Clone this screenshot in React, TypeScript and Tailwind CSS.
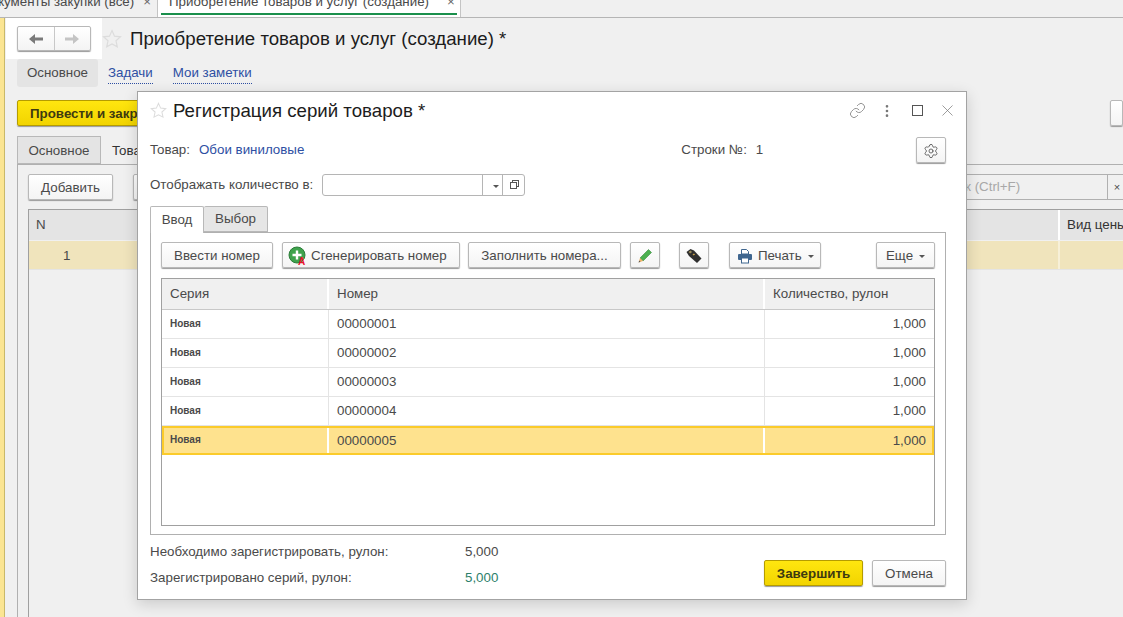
import { Link, MoreVertical, Settings, X } from 'lucide-react';

const btn =
  'flex items-center justify-center rounded-[2px] border border-[#b8b8b8] bg-gradient-to-b from-white to-[#f4f4f4] pt-px shadow-[0_1px_1px_#9a9a9a] text-[13.33px] text-[#4a4a4a]';

const rows = [
  { num: '00000001' },
  { num: '00000002' },
  { num: '00000003' },
  { num: '00000004' },
  { num: '00000005', active: true },
];

function Star({ size = 20 }: { size?: number }) {
  return (
    <svg width={size} height={size} viewBox="0 0 20 20" fill="none" stroke="#dcdcdc" strokeWidth="1.2">
      <path d="M10 1.6l2.5 5.6 6 .6-4.5 4 1.3 6L10 15l-5.3 2.8 1.3-6-4.5-4 6-.6z" />
    </svg>
  );
}

function Caret() {
  return <span className="ml-[6px] mt-[2px] h-0 w-0 border-x-[3px] border-t-[3px] border-x-transparent border-t-[#555]" />;
}

function GenerateIcon() {
  return (
    <svg width="20" height="20" viewBox="0 0 20 20">
      <circle cx="9" cy="9" r="8" fill="#3fa34d" stroke="#2c7d39" />
      <path d="M9 4.5v9M4.5 9h9" stroke="#fff" strokeWidth="2.4" />
      <text x="10" y="19" fontSize="10" fontWeight="700" fill="#e8112d" fontFamily="Liberation Sans, sans-serif">A</text>
    </svg>
  );
}

function PencilIcon() {
  return (
    <svg width="16" height="16" viewBox="0 0 16 16">
      <path d="M11.5 1.5l3 3-8.5 8.5-3-3z" fill="#4cb050" stroke="#3a8a3e" strokeWidth=".6" />
      <path d="M3 10l3 3-4.4 1.4z" fill="#f0b46a" />
      <path d="M1.6 14.4l.6-1.9 1.3 1.3z" fill="#555" />
    </svg>
  );
}

function ScannerIcon() {
  return (
    <svg width="18" height="16" viewBox="0 0 18 16">
      <path d="M1.5 4L5.5 1 9 2.5l7.5 8L12 15 4 8z" fill="#2e2e2e" />
      <path d="M3.5 4l2-1.5 1.6 1.4-2 1.6z" fill="#9a8a5a" />
      <path d="M7.5 6.5l1.4-1.1 1.2 1.1-1.4 1.1z" fill="#c9a24a" />
    </svg>
  );
}

function PrinterIcon() {
  return (
    <svg width="16" height="16" viewBox="0 0 16 16">
      <path d="M4.5 1.5h5l2 2V6h-7z" fill="#fff" stroke="#3f668f" />
      <rect x="1" y="6" width="14" height="6" rx="1" fill="#3f668f" />
      <rect x="4.5" y="10" width="7" height="5" fill="#fff" stroke="#3f668f" />
    </svg>
  );
}

function ArrowIcon({ left, color }: { left?: boolean; color: string }) {
  return (
    <svg width="16" height="12" viewBox="0 0 16 12" fill={color}>
      <path d={left ? 'M1 6l6-5v3.4h8v3.2H7V11z' : 'M15 6L9 1v3.4H1v3.2h8V11z'} />
    </svg>
  );
}

function Dialog() {
  return (
    <div className="absolute left-[137px] top-[91px] z-10 flex h-[509px] w-[830px] flex-col border border-[#a3a3a3] bg-white px-[12px] text-[13.33px] text-[#4a4a4a] shadow-[0_4px_14px_rgba(0,0,0,0.16)]">
      <div className="flex h-[37px] items-center">
        <Star size={17} />
        <span className="ml-[6px] text-[18.67px] text-[#1c1c1c]">Регистрация серий товаров *</span>
        <div className="ml-auto mr-[-8px] flex items-center text-[#777]">
          <span className="flex w-[30px] justify-center"><Link size={17} strokeWidth={1.1} /></span>
          <span className="flex w-[30px] justify-center"><MoreVertical size={16} strokeWidth={2} /></span>
          <span className="flex w-[30px] justify-center"><span className="h-[11px] w-[11px] border border-[#555]" /></span>
          <span className="flex w-[30px] justify-center"><X size={19} strokeWidth={0.9} /></span>
        </div>
      </div>

      <div className="mt-[8px] flex h-[26px] items-center">
        <span>Товар:</span>
        <span className="ml-[9px] text-[#2e4fa3]">Обои виниловые</span>
        <span className="ml-[377px]">Строки №:</span>
        <span className="ml-[9px]">1</span>
        <button className={`${btn} ml-auto mr-[8px] h-[26px] w-[30px]`}>
          <Settings size={16} strokeWidth={1.2} />
        </button>
      </div>

      <div className="mt-[11px] flex h-[22px] items-center">
        <span className="w-[172px]">Отображать количество в:</span>
        <div className="flex h-[22px] w-[203px] rounded-[3px] border border-[#b5b5b5]">
          <div className="w-[160px] border-r border-[#b5b5b5]" />
          <div className="flex w-[20px] items-center justify-center border-r border-[#b5b5b5]"><Caret /></div>
          <div className="flex flex-1 items-center justify-center">
            <span className="relative h-[7px] w-[7px] border border-[#555] shadow-[2px_-2px_0_-1px_#fff,2px_-2px_0_0_#555]" />
          </div>
        </div>
      </div>

      <div className="mt-[10px] flex h-[26px]">
        <div className="z-10 flex h-[27px] w-[54px] items-center justify-center rounded-t-[2px] border border-b-0 border-[#b8b8b8] bg-white">Ввод</div>
        <div className="flex w-[64px] items-center justify-center rounded-t-[2px] border border-l-0 border-[#b8b8b8] bg-[#e6e6e6]">Выбор</div>
      </div>

      <div className="mr-[8px] flex h-[303px] shrink-0 flex-col border border-[#b0b0b0] px-[10px] pt-[9px]">
        <div className="flex h-[26px] items-stretch">
          <button className={`${btn} w-[112px]`}>Ввести номер</button>
          <button className={`${btn} ml-[9px] w-[178px] !justify-start gap-[3px] pl-[5px]`}><GenerateIcon />Сгенерировать номер</button>
          <button className={`${btn} ml-[8px] w-[153px]`}>Заполнить номера...</button>
          <button className={`${btn} ml-[9px] w-[30px]`}><PencilIcon /></button>
          <button className={`${btn} ml-[19px] w-[30px]`}><ScannerIcon /></button>
          <button className={`${btn} ml-[20px] w-[92px] !justify-start gap-[5px] pl-[7px]`}><PrinterIcon /><span className="flex items-center">Печать<Caret /></span></button>
          <button className={`${btn} ml-auto w-[59px]`}>Еще<Caret /></button>
        </div>

        <div className="mt-[10px] flex h-[248px] flex-col border border-[#a0a0a0]">
          <div className="grid h-[31px] grid-cols-[167px_436px_1fr] border-b border-[#c8c8c8] bg-[#f0f0f0]">
            <div className="flex items-center border-r-2 border-white pl-[8px]">Серия</div>
            <div className="flex items-center border-r-2 border-white pl-[8px]">Номер</div>
            <div className="flex items-center pl-[8px]">Количество, рулон</div>
          </div>
          {rows.map((r) => (
            <div
              key={r.num}
              className={
                r.active
                  ? 'grid h-[29px] grid-cols-[167px_436px_1fr] bg-[#fee28e] outline-2 -outline-offset-2 outline-[#fbcb2a]'
                  : 'grid h-[29px] grid-cols-[167px_436px_1fr] border-b border-[#e4e4e4]'
              }
            >
              <div className={`flex items-center pb-[2px] pl-[8px] text-[10px] font-bold ${r.active ? 'border-r-2 border-white' : 'border-r border-[#e4e4e4]'}`}>Новая</div>
              <div className={`flex items-center pl-[8px] ${r.active ? 'border-r-2 border-white' : 'border-r border-[#e4e4e4]'}`}>{r.num}</div>
              <div className="flex items-center justify-end pr-[8px]">1,000</div>
            </div>
          ))}
        </div>
      </div>

      <div className="mt-[8px] flex flex-1 pb-[12px]">
        <div className="flex flex-col">
          <div className="flex h-[18px] items-center"><span className="w-[315px]">Необходимо зарегистрировать, рулон:</span>5,000</div>
          <div className="mt-[8px] flex h-[18px] items-center"><span className="w-[315px]">Зарегистрировано серий, рулон:</span><span className="text-[#2d7f6b]">5,000</span></div>
        </div>
        <div className="ml-auto mr-[8px] flex items-end gap-[9px] pb-px">
          <button className="flex h-[26px] w-[99px] items-center justify-center rounded-[2px] border border-[#b59c00] bg-gradient-to-b from-[#ffe60f] to-[#f2d400] pt-px text-[13.33px] font-bold text-[#3e3a10] shadow-[0_1px_1px_#9a9a9a]">Завершить</button>
          <button className={`${btn} h-[26px] w-[74px]`}>Отмена</button>
        </div>
      </div>
    </div>
  );
}

export default function App() {
  return (
    <div className="relative flex h-[617px] w-[1123px] flex-col overflow-hidden bg-[#f0f0f0] font-['Liberation_Sans',Arial,sans-serif] text-[13.33px] text-[#4a4a4a]">
      {/* window tabs, cut off by the top of the picture */}
      <div className="flex h-[18px] shrink-0 items-stretch border-b border-[#b5b5b5] bg-[#f0f0f0]">
        <div className="flex w-[158px] items-end justify-end overflow-hidden whitespace-nowrap border-r border-[#c4c4c4] pb-[7px] pr-[6px] leading-[16px]">
          кументы закупки (все)<span className="ml-[9px] text-[#666]">×</span>
        </div>
        <div className="relative flex w-[303px] items-end overflow-hidden whitespace-nowrap border-r border-[#c4c4c4] bg-white pb-[7px] pl-[11px] leading-[16px]">
          Приобретение товаров и услуг (создание)<span className="ml-[18px] text-[#666]">×</span>
          <span className="absolute bottom-[2px] left-[3px] right-[3px] h-[2px] bg-[#1a8f4c]" />
        </div>
      </div>

      <div className="flex min-h-0 flex-1">
        <div className="w-[5px] shrink-0 border-r border-[#c9b96a] bg-[#fbe593]" />
        <div className="flex min-w-0 flex-1 flex-col">
          <div className="flex h-[41px] shrink-0 items-center">
            <div className="ml-px flex h-[41px] w-[96px] items-center justify-center bg-white">
              <div className={`${btn} h-[25px] w-[74px] items-stretch !pt-0`}>
                <div className="flex flex-1 items-center justify-center border-r border-[#c8c8c8]"><ArrowIcon left color="#7a7a7a" /></div>
                <div className="flex flex-1 items-center justify-center"><ArrowIcon color="#c4c4c4" /></div>
              </div>
            </div>
            <Star size={20} />
            <span className="ml-[8px] text-[18.67px] text-[#1c1c1c]">Приобретение товаров и услуг (создание) *</span>
          </div>

          <div className="ml-[12px] flex h-[28px] shrink-0 items-center">
            <div className="flex h-[28px] w-[81px] items-center justify-center rounded-[3px] bg-[#e4e4e4]">Основное</div>
            <span className="ml-[10px] mt-px border-b border-dotted border-[#2e4fa3] text-[#2e4fa3]">Задачи</span>
            <span className="ml-[20px] mt-px border-b border-dotted border-[#2e4fa3] text-[#2e4fa3]">Мои заметки</span>
          </div>

          <div className="ml-[12px] mt-[13px] flex h-[26px] shrink-0">
            <button className="flex w-[180px] items-center overflow-hidden whitespace-nowrap rounded-[2px] border border-[#b59c00] bg-gradient-to-b from-[#ffe60f] to-[#f2d400] pl-[12px] pt-px font-bold text-[#3e3a10] shadow-[0_1px_1px_#9a9a9a]">Провести и закрыть</button>
            <button className={`${btn} ml-auto w-[13px]`} />
          </div>

          <div className="ml-[12px] mt-[10px] flex h-[28px] shrink-0">
            <div className="flex w-[84px] items-center justify-center border border-[#b8b8b8] bg-[#e4e4e4] pt-px">Основное</div>
            <div className="flex w-[80px] items-center pl-[11px] pt-px text-[#333]">Товары</div>
          </div>

          <div className="ml-[12px] flex min-h-0 flex-1 flex-col border-l border-t border-[#b0b0b0] pl-[10px] pt-[9px]">
            <div className="flex h-[26px] shrink-0">
              <button className={`${btn} w-[85px]`}>Добавить</button>
              <button className={`${btn} ml-[20px] w-[60px]`} />
              <div className="ml-auto flex w-[203px] border-y border-[#b0b0b0]">
                <span className="flex flex-1 items-center pl-[14px] text-[#a8a8a8]">Поиск (Ctrl+F)</span>
                <span className="flex w-[16px] items-center justify-center border-l border-[#b0b0b0] pl-[3px] text-[11px]">×</span>
              </div>
            </div>
            <div className="mt-[9px] flex min-h-0 flex-1 flex-col border-l border-t border-[#a0a0a0]">
              <div className="flex h-[30px] shrink-0 bg-[#e4e4e4]">
                <span className="flex w-[100px] items-center pl-[7px]">N</span>
                <span className="ml-auto flex w-[65px] items-center overflow-hidden whitespace-nowrap border-l-2 border-white pl-[7px] text-[#333]">Вид цены</span>
              </div>
              <div className="mt-px flex h-[29px] shrink-0 border-b border-[#e4e4e4] bg-[#f0e4bc]">
                <span className="flex w-[100px] items-center pl-[34px] pt-px">1</span>
                <span className="ml-auto w-[65px] border-l-2 border-[#f7f0d8]" />
              </div>
            </div>
          </div>
        </div>
      </div>

      <Dialog />
    </div>
  );
}
